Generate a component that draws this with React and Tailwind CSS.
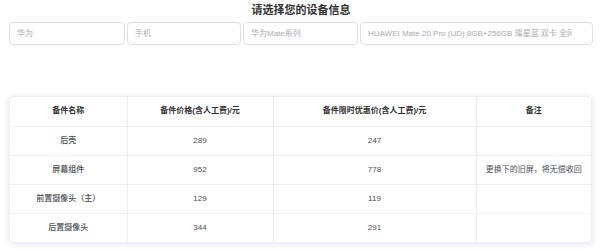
const font = { fontFamily: '"Liberation Sans", "Noto Sans CJK SC", sans-serif' };

const inputs = ['华为', '手机', '华为Mate系列', 'HUAWEI Mate 20 Pro (UD) 8GB+256GB 璨星蓝 双卡 全网通'];

const rows = [
  { name: '后壳', price: '289', promo: '247', note: '' },
  { name: '屏幕组件', price: '952', promo: '778', note: '更换下的旧屏，将无偿收回' },
  { name: '前置摄像头（主）', price: '129', promo: '119', note: '' },
  { name: '后置摄像头', price: '344', promo: '291', note: '' },
];

export default function App() {
  return (
    <div className="w-[600px] h-[251px] bg-white pl-[9px] pr-[7px]" style={font}>
      <h1 className="pt-[3px] text-center text-[11px] leading-[14px] font-bold text-[#303133]">
        请选择您的设备信息
      </h1>

      <div className="mt-[5px] grid grid-cols-[116px_114px_115px_233px] gap-[2px]">
        {inputs.map((v) => (
          <div
            key={v}
            className="h-[23px] border border-[#dcdfe6] rounded-[4px] pl-[7px] flex items-center overflow-hidden"
          >
            <div className="w-[calc(100%-20px)] min-w-0 overflow-hidden whitespace-nowrap text-[8px] text-[#a8abb2]">
              {v}
            </div>
          </div>
        ))}
      </div>

      <div className="mt-[51px] w-[583px] border border-[#ebeef5] rounded-[4px] overflow-hidden shadow-[0_1px_6px_rgba(0,50,130,0.12)]">
        <table className="w-full table-fixed border-collapse text-[8px] text-center">
          <colgroup>
            <col className="w-[117px]" />
            <col className="w-[146px]" />
            <col className="w-[203px]" />
            <col />
          </colgroup>
          <thead>
            <tr className="h-[29px] font-bold text-[#303133]">
              <th className="border-r border-b border-[#ebeef5]">备件名称</th>
              <th className="border-r border-b border-[#ebeef5]">备件价格(含人工费)/元</th>
              <th className="border-r border-b border-[#ebeef5]">备件限时优惠价(含人工费)/元</th>
              <th className="border-b border-[#ebeef5]">备注</th>
            </tr>
          </thead>
          <tbody className="text-[#4a4d52]">
            {rows.map((r, i) => (
              <tr key={r.name} className="h-[29px]">
                <td className={`border-r border-[#ebeef5] font-medium ${i < 3 ? 'border-b' : ''}`}>{r.name}</td>
                <td className={`border-r border-[#ebeef5] ${i < 3 ? 'border-b' : ''}`}>{r.price}</td>
                <td className={`border-r border-[#ebeef5] ${i < 3 ? 'border-b' : ''}`}>{r.promo}</td>
                <td className={`${i < 2 ? 'border-b border-[#ebeef5]' : ''} ${i === 2 ? 'border-b border-[#f4f5f8]' : ''}`}>
                  {r.note}
                </td>
              </tr>
            ))}
          </tbody>
        </table>
      </div>
    </div>
  );
}
